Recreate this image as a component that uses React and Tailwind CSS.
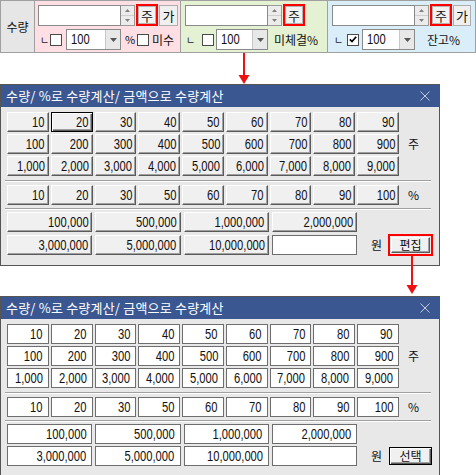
import React from "react";

const KR = "font-['Noto_Sans_CJK_KR','Liberation_Sans',sans-serif]";
const NUM = "font-['Liberation_Sans','Noto_Sans_CJK_KR',sans-serif]";

const BTN3D =
  "bg-[#f0f0f0] border border-t-white border-l-white border-r-[#5a5a5a] border-b-[#5a5a5a] shadow-[inset_-1px_-1px_0_#a0a0a0]";
const BTNFOCUS =
  "bg-[#f0f0f0] border border-black shadow-[inset_1px_1px_0_#ffffff,inset_-1px_-1px_0_#5a5a5a,inset_-2px_-2px_0_#a0a0a0]";
const FLAT = "bg-white border border-[#6e6e6e]";

function Spinner() {
  return (
    <div className="flex h-[21px] w-[14px] flex-col border border-l-0 border-[#9a9a9a] bg-[#ececec]">
      <div className="flex flex-1 items-center justify-center border-b border-[#cfcfcf]">
        <svg width="5" height="3" viewBox="0 0 5 3">
          <path d="M0 3 L2.5 0 L5 3 Z" fill="#808080" />
        </svg>
      </div>
      <div className="flex flex-1 items-center justify-center">
        <svg width="5" height="3" viewBox="0 0 5 3">
          <path d="M0 0 L5 0 L2.5 3 Z" fill="#808080" />
        </svg>
      </div>
    </div>
  );
}

function TextBox() {
  return <div className="h-[21px] w-[83px] border border-[#8a8a8a] bg-white" />;
}

function JuButton() {
  return (
    <div className="ml-[1px] flex h-[22px] w-[22px] border-2 border-[#ff0000]">
      <div className="flex flex-1 items-center justify-center border border-[#b4b4b4] bg-[#f2f2f2] text-[13px] leading-none">
        주
      </div>
    </div>
  );
}

function GaButton({ w }) {
  return (
    <div
      className={`ml-[1px] flex h-[21px] ${w} items-center justify-center border border-[#adadad] bg-[#f0f0f0] text-[13px] leading-none`}
    >
      가
    </div>
  );
}

function Check({ checked }) {
  return (
    <div className="flex h-[12px] w-[12px] shrink-0 items-center justify-center border border-[#4a4a4a] bg-white">
      {checked && (
        <svg width="8" height="7" viewBox="0 0 8 7">
          <path d="M0.8 3.4 L3 5.6 L7.2 0.8" fill="none" stroke="#000" strokeWidth="1.7" />
        </svg>
      )}
    </div>
  );
}

function Combo({ w }) {
  return (
    <div className={`flex h-[21px] ${w} border border-[#8a8a8a] bg-white`}>
      <div className={`flex-1 pl-[4px] text-[14px] leading-[19px] ${NUM}`}>
        <span className="inline-block origin-left scale-x-[0.8]">100</span>
      </div>
      <div className="flex w-[15px] items-center justify-center border-l border-[#c8c8c8] bg-[#e8e8e8]">
        <svg width="7" height="4" viewBox="0 0 7 4">
          <path d="M0 0 L7 0 L3.5 4 Z" fill="#555" />
        </svg>
      </div>
    </div>
  );
}

function Corner({ w }) {
  return <div className={`${w} shrink-0 text-[10px] leading-none text-[#222]`}>ㄴ</div>;
}

function TopBar() {
  return (
    <div className={`flex h-[53px] w-[476px] border border-[#a0a0a0] text-[12px] text-[#111] ${KR}`}>
      <div className="flex w-[34px] items-center justify-center border-r border-[#a0a0a0] bg-[#e6e6e6] text-[12px]">
        수량
      </div>
      {/* pink */}
      <div className="w-[146px] border-r border-[#a0a0a0] bg-[#ffdfe4] pt-[3px]">
        <div className="flex items-center pl-[3px]">
          <TextBox />
          <Spinner />
          <JuButton />
          <GaButton w="w-[19px]" />
        </div>
        <div className="mt-[3px] flex h-[21px] items-center pl-[5px]">
          <Corner w="w-[10px]" />
          <Check />
          <div className="ml-[4px]">
            <Combo w="w-[55px]" />
          </div>
          <div className="ml-[4px] w-[8px] text-[11px]">%</div>
          <div className="ml-[4px]">
            <Check />
          </div>
          <div className="ml-[3px] text-[12px]">미수</div>
        </div>
      </div>
      {/* green */}
      <div className="w-[147px] border-r border-[#a0a0a0] bg-[#e4f2d3] pt-[3px]">
        <div className="flex items-center pl-[4px]">
          <TextBox />
          <Spinner />
          <JuButton />
        </div>
        <div className="mt-[3px] flex h-[21px] items-center pl-[5px]">
          <Corner w="w-[16px]" />
          <Check />
          <div className="ml-[2px]">
            <Combo w="w-[52px]" />
          </div>
          <div className="ml-[6px] text-[12px]">미체결%</div>
        </div>
      </div>
      {/* blue */}
      <div className="flex-1 bg-[#daeefa] pt-[3px]">
        <div className="flex items-center pl-[4px]">
          <TextBox />
          <Spinner />
          <JuButton />
          <GaButton w="w-[18px]" />
        </div>
        <div className="mt-[3px] flex h-[21px] items-center pl-[6px]">
          <Corner w="w-[13px]" />
          <Check checked />
          <div className="ml-[3px]">
            <Combo w="w-[53px]" />
          </div>
          <div className="ml-[12px] text-[12px]">잔고%</div>
        </div>
      </div>
    </div>
  );
}

const qtyRows = [
  ["10", "20", "30", "40", "50", "60", "70", "80", "90"],
  ["100", "200", "300", "400", "500", "600", "700", "800", "900"],
  ["1,000", "2,000", "3,000", "4,000", "5,000", "6,000", "7,000", "8,000", "9,000"],
];
const pctRow = ["10", "20", "30", "50", "60", "70", "80", "90", "100"];
const money1 = ["100,000", "500,000", "1,000,000", "2,000,000"];
const money2 = ["3,000,000", "5,000,000", "10,000,000"];

function Cell({ label, flat, focus }) {
  const cls = flat ? FLAT : focus ? BTNFOCUS : BTN3D;
  return (
    <div
      className={`flex h-[20px] items-center justify-end ${flat ? "pr-[5px]" : "pr-[3px]"} text-[14px] leading-none text-[#111] ${NUM} ${cls}`}
    >
      <span className="inline-block origin-right scale-x-[0.8]">{label}</span>
    </div>
  );
}

function Separator() {
  return <div className="ml-[-2px] h-[2px] w-[426px] border-t border-b border-t-[#a0a0a0] border-b-white" />;
}

function Dialog({ flat }) {
  return (
    <div className={`w-[440px] border border-[#555] bg-[#e8e8e8] ${KR}`}>
      <div className="flex h-[22px] items-center justify-between bg-[#3a5792] pl-[5px] pr-[9px] text-[13px] text-white">
        <span className="tracking-[0.2px]">수량/ %로 수량계산/ 금액으로 수량계산</span>
        <svg width="10" height="10" viewBox="0 0 10 10">
          <path d="M0.5 0.5 L9.5 9.5 M9.5 0.5 L0.5 9.5" stroke="#c3cce0" strokeWidth="1" />
        </svg>
      </div>
      <div className="pl-[6px] pt-[5px] pb-[9px]">
        <div className="flex items-center">
          <div className="grid w-[392px] grid-cols-9 gap-[2px]">
            {qtyRows.flat().map((v, i) => (
              <Cell key={i} label={v} flat={flat} focus={!flat && i === 1} />
            ))}
          </div>
          <div className="ml-[9px] text-[12px] text-[#111]">주</div>
        </div>
        <div className="mt-[4px]">
          <Separator />
        </div>
        <div className="mt-[3px] flex items-center">
          <div className="grid w-[392px] grid-cols-9 gap-[2px]">
            {pctRow.map((v, i) => (
              <Cell key={i} label={v} flat={flat} />
            ))}
          </div>
          <div className="ml-[9px] text-[12px] text-[#111]">%</div>
        </div>
        <div className="mt-[3px]">
          <Separator />
        </div>
        <div className="mt-[2px] grid w-[350px] grid-cols-4 gap-[3px]">
          {money1.map((v, i) => (
            <Cell key={i} label={v} flat={flat} />
          ))}
        </div>
        <div className="mt-[2px] flex items-center">
          <div className="grid w-[350px] grid-cols-4 gap-[3px]">
            {money2.map((v, i) => (
              <Cell key={i} label={v} flat={flat} />
            ))}
            <div className="h-[20px] border border-[#6e6e6e] bg-white" />
          </div>
          <div className="ml-[14px] text-[12px] text-[#111]">원</div>
          {flat ? (
            <div
              className={`ml-[7px] flex h-[18px] w-[43px] items-center justify-center text-[12px] text-[#111] ${BTNFOCUS}`}
            >
              선택
            </div>
          ) : (
            <div className="ml-[6px] flex h-[22px] w-[45px] border-2 border-[#ff0000] p-[1px]">
              <div className={`flex flex-1 items-center justify-center text-[12px] text-[#111] ${BTN3D}`}>편집</div>
            </div>
          )}
        </div>
      </div>
    </div>
  );
}

function ArrowDown({ h }) {
  return (
    <svg width="12" height={h} viewBox={`0 0 12 ${h}`}>
      <line x1="6" y1="0" x2="6" y2={h - 7} stroke="#ee1111" strokeWidth="2" />
      <path d={`M0.5 ${h - 9} L11.5 ${h - 9} L6 ${h} Z`} fill="#ee1111" />
    </svg>
  );
}

export default function App() {
  return (
    <div className="relative h-[475px] w-[476px] overflow-hidden bg-white">
      <TopBar />
      <div className="mt-[31px]">
        <Dialog />
      </div>
      <div className="mt-[30px]">
        <Dialog flat />
      </div>
      <div className="absolute left-[238px] top-[53px]">
        <ArrowDown h={31} />
      </div>
      <div className="absolute left-[406px] top-[256px]">
        <ArrowDown h={38} />
      </div>
    </div>
  );
}
